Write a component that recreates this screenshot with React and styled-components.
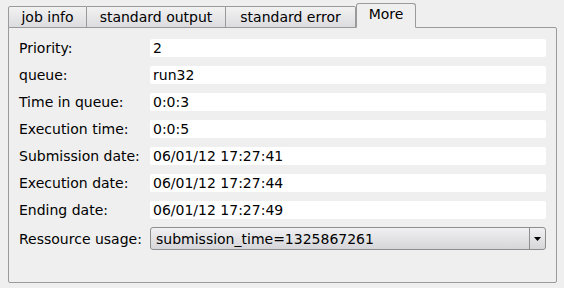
import React from "react";
import styled, { createGlobalStyle } from "styled-components";

const Global = createGlobalStyle`
  html, body { margin: 0; padding: 0; background: #efefef; }
  body { font-family: "DejaVu Sans", "Liberation Sans", sans-serif; font-size: 14px; color: #000; }
`;

const Window = styled.div`
  width: 564px;
  height: 288px;
  box-sizing: border-box;
  padding: 3px 7px 0 8px;
  background: #efefef;
`;

const TabBar = styled.div`
  display: flex;
  align-items: flex-end;
  height: 25px;
  position: relative;
  z-index: 1;
  margin-bottom: -1px;
`;

const Tab = styled.div`
  box-sizing: border-box;
  width: ${(p) => p.$w}px;
  height: ${(p) => (p.$active ? "25px" : "22px")};
  padding-bottom: ${(p) => (p.$active ? "3px" : "0")};
  display: flex;
  align-items: center;
  justify-content: center;
  white-space: nowrap;
  border: 1px solid #9a9a9a;
  border-bottom: ${(p) => (p.$active ? "1px solid #efefef" : "1px solid #9a9a9a")};
  border-left: ${(p) => (p.$first || p.$active ? "1px solid #9a9a9a" : "none")};
  border-radius: ${(p) => (p.$active ? "3px 3px 0 0" : p.$first ? "2px 0 0 0" : p.$last ? "0 2px 0 0" : "0")};
  background: ${(p) =>
    p.$active ? "#efefef" : "linear-gradient(#f2f2f2, #dcdce0)"};
`;

const Panel = styled.div`
  box-sizing: border-box;
  height: 256px;
  border: 1px solid #9a9a9a;
  border-radius: 0 2px 2px 2px;
  padding: 11px 10px 0 10px;
  display: grid;
  grid-template-columns: 131px 1fr;
  row-gap: 9px;
  align-items: center;
  align-content: start;
`;

const Label = styled.div`
  line-height: 18px;
  white-space: nowrap;
`;

const Field = styled.div`
  height: 18px;
  line-height: 18px;
  background: #fff;
  border-radius: 2px;
  padding-left: 3px;
  white-space: nowrap;
`;

const Combo = styled.div`
  box-sizing: border-box;
  height: 23px;
  margin-top: -1px;
  border: 1px solid #8e8e8e;
  border-radius: 3px;
  background: linear-gradient(#f0f0f2, #d6d6da);
  display: flex;
  align-items: center;
`;

const ComboText = styled.div`
  flex: 1;
  padding-left: 5px;
  white-space: nowrap;
`;

const ComboButton = styled.div`
  width: 15px;
  align-self: stretch;
  border-left: 1px solid #8e8e8e;
  display: flex;
  align-items: center;
  justify-content: center;
`;

const ComboLabel = styled(Label)`
  margin-top: -1px;
`;

const rows = [
  ["Priority:", "2"],
  ["queue:", "run32"],
  ["Time in queue:", "0:0:3"],
  ["Execution time:", "0:0:5"],
  ["Submission date:", "06/01/12 17:27:41"],
  ["Execution date:", "06/01/12 17:27:44"],
  ["Ending date:", "06/01/12 17:27:49"],
];

export default function App() {
  return (
    <>
      <Global />
      <Window>
        <TabBar>
          <Tab $first $w={79}>job info</Tab>
          <Tab $w={139}>standard output</Tab>
          <Tab $last $w={130}>standard error</Tab>
          <Tab $active $w={60}>More</Tab>
        </TabBar>
        <Panel>
          {rows.map(([l, v]) => (
            <React.Fragment key={l}>
              <Label>{l}</Label>
              <Field>{v}</Field>
            </React.Fragment>
          ))}
          <ComboLabel>Ressource usage:</ComboLabel>
          <Combo>
            <ComboText>submission_time=1325867261</ComboText>
            <ComboButton>
              <svg width="7" height="4" viewBox="0 0 7 4">
                <path d="M0 0H7L3.5 4Z" fill="#000" />
              </svg>
            </ComboButton>
          </Combo>
        </Panel>
      </Window>
    </>
  );
}
